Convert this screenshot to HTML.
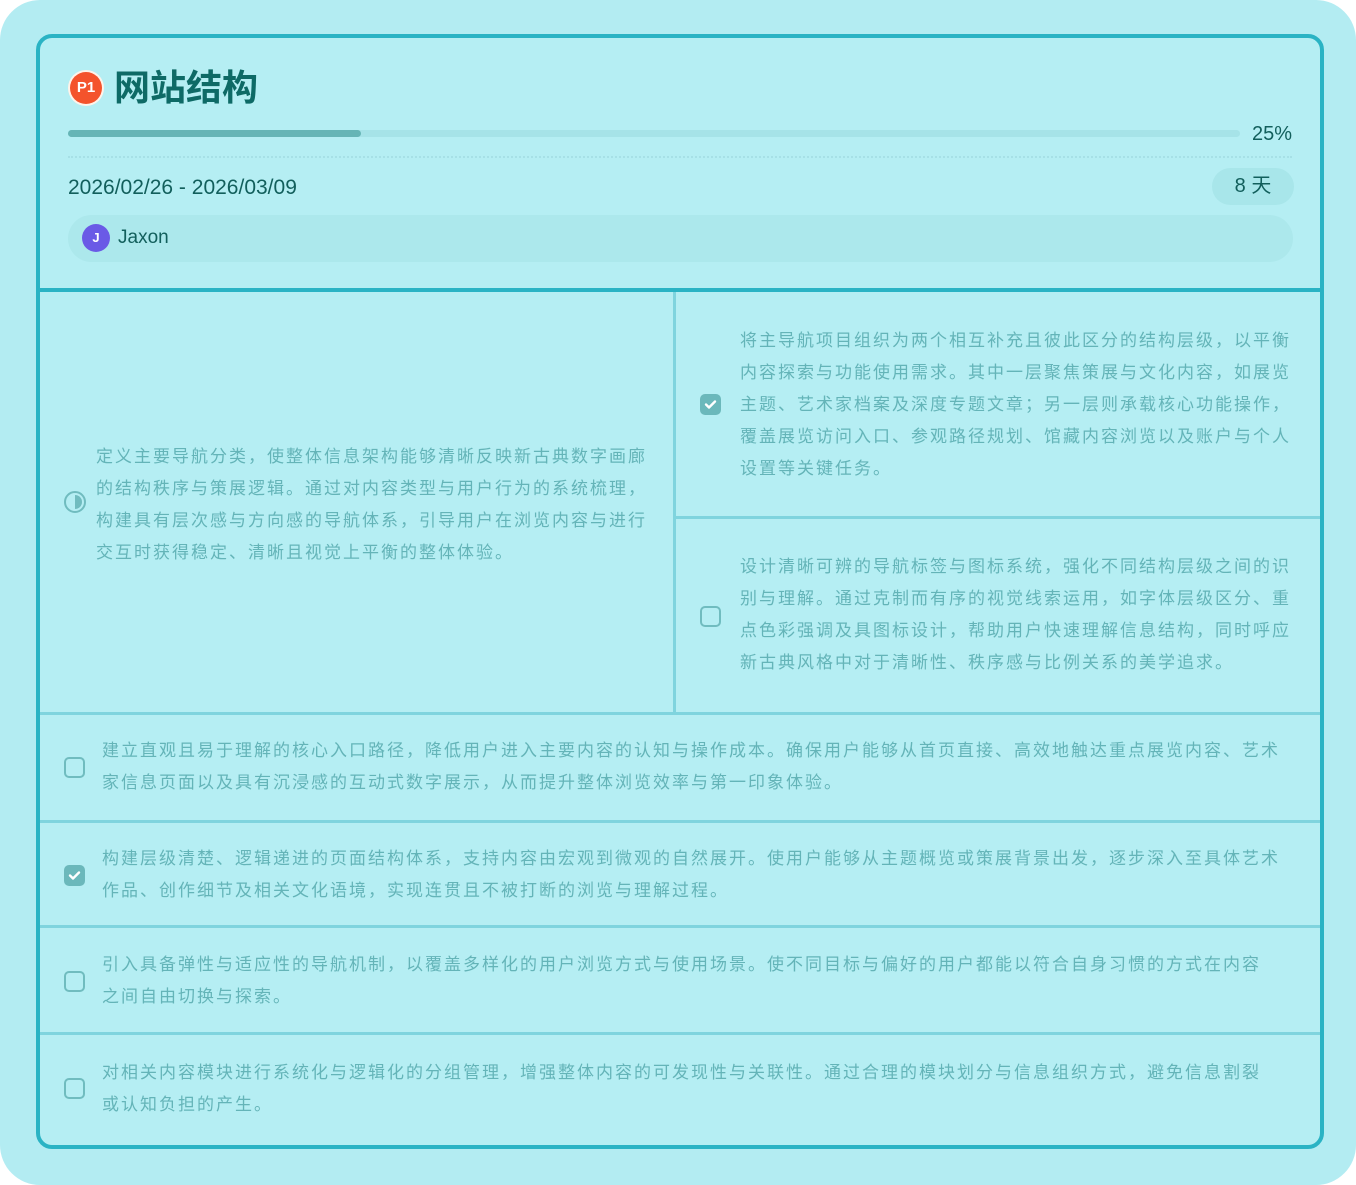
<!DOCTYPE html>
<html><head><meta charset="utf-8"><style>
*{margin:0;padding:0;box-sizing:border-box}
html,body{width:1356px;height:1185px;background:#fff;overflow:hidden}
body{font-family:"Liberation Sans","Noto Sans CJK SC",sans-serif}
.outer{position:absolute;left:0;top:0;width:1356px;height:1185px;background:#b3ecf2;border-radius:40px}
.card{position:absolute;left:36px;top:34px;width:1288px;height:1115px;border:4px solid #2ab3c4;border-radius:16px;background:#b5eef3;overflow:hidden}
.a{position:absolute}
.t{position:absolute;font-size:17px;letter-spacing:2px;line-height:32px;color:#64b4b8;white-space:nowrap}
.cb{position:absolute;width:21px;height:21px;border:2px solid #70bcbf;border-radius:5px}
.cb.on{background:#6bb8bb;border-color:#6bb8bb}
.hl{position:absolute;left:0;width:1280px;height:3px;background:#7fd4de}
</style></head><body>
<div class="outer"></div>
<div class="card">
 <div class="a" style="left:28px;top:32px;width:36px;height:36px;border-radius:50%;background:#fff3ea"></div>
 <div class="a" style="left:30px;top:34px;width:32px;height:32px;border-radius:50%;background:#f4532c;color:#fff;font-size:15px;font-weight:bold;line-height:32px;text-align:center">P1</div>
 <div class="a" style="left:74px;top:27px;font-size:36px;font-weight:bold;color:#0e6a66;line-height:46px">网站结构</div>
 <div class="a" style="left:28px;top:92px;width:1172px;height:7px;border-radius:4px;background:#a6e3e8"></div>
 <div class="a" style="left:28px;top:92px;width:293px;height:7px;border-radius:4px;background:#66b5b6"></div>
 <div class="a" style="left:1212px;top:84px;font-size:20px;color:#125f5c;line-height:24px">25%</div>
 <div class="a" style="left:28px;top:118px;width:1224px;border-top:2px dotted #a6e0e6"></div>
 <div class="a" style="left:28px;top:138px;font-size:21px;color:#125f5c;line-height:24px">2026/02/26 - 2026/03/09</div>
 <div class="a" style="left:1172px;top:130px;width:82px;height:37px;border-radius:19px;background:#a8e6ea;font-size:20px;color:#125f5c;line-height:37px;text-align:center">8 天</div>
 <div class="a" style="left:28px;top:177px;width:1225px;height:47px;border-radius:24px;background:#ace8ec"></div>
 <div class="a" style="left:42px;top:186px;width:28px;height:28px;border-radius:50%;background:#6a5ae6;color:#fff;font-size:13px;font-weight:bold;line-height:28px;text-align:center">J</div>
 <div class="a" style="left:78px;top:188px;font-size:19px;color:#125f5c;line-height:24px">Jaxon</div>
 <div class="a" style="left:0;top:250px;width:1280px;height:4px;background:#2ab3c4"></div>

 <div class="a" style="left:633px;top:254px;width:3px;height:420px;background:#7fd4de"></div>
 <div class="hl" style="left:636px;top:478px;width:644px"></div>
 <div class="hl" style="top:674px"></div>
 <div class="hl" style="top:782px"></div>
 <div class="hl" style="top:887px"></div>
 <div class="hl" style="top:994px"></div>

 <svg class="a" style="left:23px;top:452px" width="24" height="24" viewBox="0 0 24 24"><circle cx="12" cy="12" r="10" fill="none" stroke="#70bcbf" stroke-width="2"/><path d="M12 5a7 7 0 0 1 0 14z" fill="#70bcbf"/></svg>
 <div class="t" style="left:56px;top:403px">定义主要导航分类，使整体信息架构能够清晰反映新古典数字画廊<br>的结构秩序与策展逻辑。通过对内容类型与用户行为的系统梳理，<br>构建具有层次感与方向感的导航体系，引导用户在浏览内容与进行<br>交互时获得稳定、清晰且视觉上平衡的整体体验。</div>

 <div class="cb on" style="left:660px;top:356px"><svg width="17" height="17" viewBox="0 0 17 17"><path d="M4 8.5l3 3 6-6" fill="none" stroke="#fff" stroke-width="2.4" stroke-linecap="round" stroke-linejoin="round"/></svg></div>
 <div class="t" style="left:700px;top:287px">将主导航项目组织为两个相互补充且彼此区分的结构层级，以平衡<br>内容探索与功能使用需求。其中一层聚焦策展与文化内容，如展览<br>主题、艺术家档案及深度专题文章；另一层则承载核心功能操作，<br>覆盖展览访问入口、参观路径规划、馆藏内容浏览以及账户与个人<br>设置等关键任务。</div>

 <div class="cb" style="left:660px;top:568px"></div>
 <div class="t" style="left:700px;top:513px">设计清晰可辨的导航标签与图标系统，强化不同结构层级之间的识<br>别与理解。通过克制而有序的视觉线索运用，如字体层级区分、重<br>点色彩强调及具图标设计，帮助用户快速理解信息结构，同时呼应<br>新古典风格中对于清晰性、秩序感与比例关系的美学追求。</div>

 <div class="cb" style="left:24px;top:719px"></div>
 <div class="t" style="left:62px;top:697px">建立直观且易于理解的核心入口路径，降低用户进入主要内容的认知与操作成本。确保用户能够从首页直接、高效地触达重点展览内容、艺术<br>家信息页面以及具有沉浸感的互动式数字展示，从而提升整体浏览效率与第一印象体验。</div>

 <div class="cb on" style="left:24px;top:827px"><svg width="17" height="17" viewBox="0 0 17 17"><path d="M4 8.5l3 3 6-6" fill="none" stroke="#fff" stroke-width="2.4" stroke-linecap="round" stroke-linejoin="round"/></svg></div>
 <div class="t" style="left:62px;top:805px">构建层级清楚、逻辑递进的页面结构体系，支持内容由宏观到微观的自然展开。使用户能够从主题概览或策展背景出发，逐步深入至具体艺术<br>作品、创作细节及相关文化语境，实现连贯且不被打断的浏览与理解过程。</div>

 <div class="cb" style="left:24px;top:933px"></div>
 <div class="t" style="left:62px;top:911px">引入具备弹性与适应性的导航机制，以覆盖多样化的用户浏览方式与使用场景。使不同目标与偏好的用户都能以符合自身习惯的方式在内容<br>之间自由切换与探索。</div>

 <div class="cb" style="left:24px;top:1040px"></div>
 <div class="t" style="left:62px;top:1019px">对相关内容模块进行系统化与逻辑化的分组管理，增强整体内容的可发现性与关联性。通过合理的模块划分与信息组织方式，避免信息割裂<br>或认知负担的产生。</div>
</div>
</body></html>
